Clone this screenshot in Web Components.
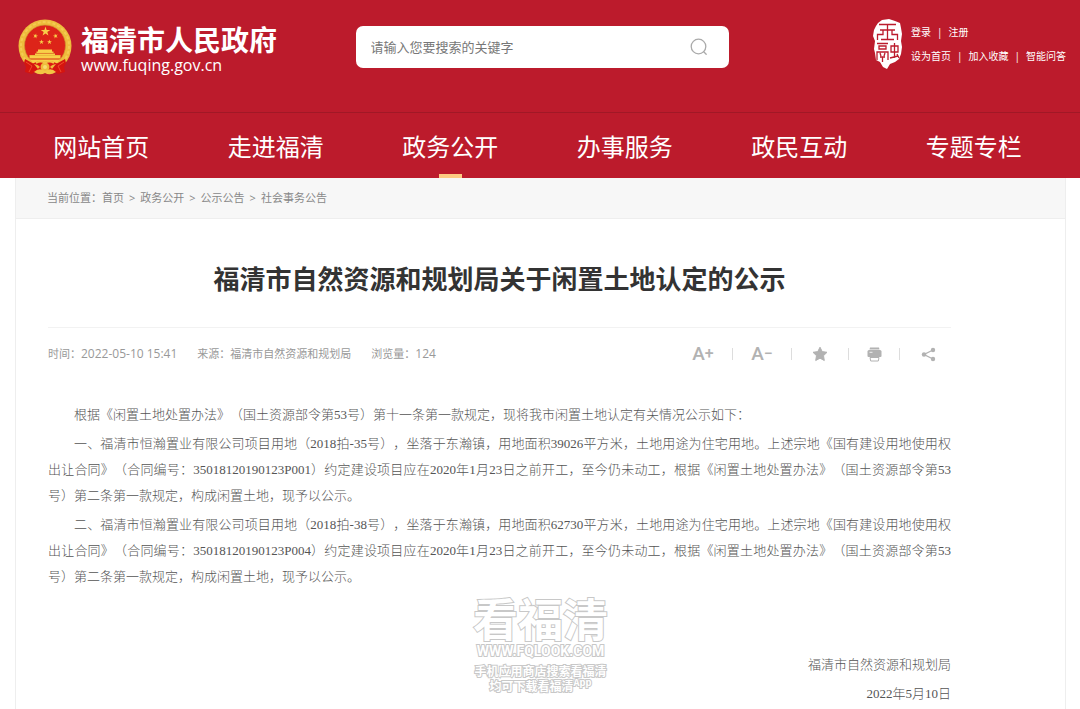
<!DOCTYPE html>
<html lang="zh-CN">
<head>
<meta charset="UTF-8">
<meta name="viewport" content="width=device-width, initial-scale=1">
<title>福清市自然资源和规划局关于闲置土地认定的公示</title>
<style>
  :root {
    --red: #bc1b2c;
    --red-dark: #a11826;
    --line: #eeeeee;
    --muted: #999999;
    --body-font: "Liberation Serif", "Noto Sans CJK SC", serif;
  }
  body {
    margin: 0;
    background: #fff;
    font-family: "Open Sans", "Noto Sans CJK SC", sans-serif;
    text-spacing-trim: space-all;
  }
</style>
</head>
<body>
  <gov-header>
    <site-logo slot="logo" url="www.fuqing.gov.cn">福清市人民政府</site-logo>
    <site-search slot="search" hint="请输入您要搜索的关键字"></site-search>
    <user-links slot="links"></user-links>
  </gov-header>
  <main-nav active="政务公开"></main-nav>
  <page-panel>
    <bread-crumb slot="crumb"></bread-crumb>
    <notice-article>
      <span slot="title">福清市自然资源和规划局关于闲置土地认定的公示</span>
      <article-meta slot="meta" time="2022-05-10 15:41" source="福清市自然资源和规划局" views="124"></article-meta>
      <article-tools slot="tools"></article-tools>
      <notice-text>根据《闲置土地处置办法》（国土资源部令第53号）第十一条第一款规定，现将我市闲置土地认定有关情况公示如下：</notice-text>
      <notice-text>一、福清市恒瀚置业有限公司项目用地（2018拍-35号），坐落于东瀚镇，用地面积39026平方米，土地用途为住宅用地。上述宗地《国有建设用地使用权出让合同》（合同编号：35018120190123P001）约定建设项目应在2020年1月23日之前开工，至今仍未动工，根据《闲置土地处置办法》（国土资源部令第53号）第二条第一款规定，构成闲置土地，现予以公示。</notice-text>
      <notice-text>二、福清市恒瀚置业有限公司项目用地（2018拍-38号），坐落于东瀚镇，用地面积62730平方米，土地用途为住宅用地。上述宗地《国有建设用地使用权出让合同》（合同编号：35018120190123P004）约定建设项目应在2020年1月23日之前开工，至今仍未动工，根据《闲置土地处置办法》（国土资源部令第53号）第二条第一款规定，构成闲置土地，现予以公示。</notice-text>
      <span slot="signer">福清市自然资源和规划局</span>
      <span slot="date">2022年5月10日</span>
    </notice-article>
    <water-mark slot="overlay"></water-mark>
  </page-panel>

<script>
  // Small helper: attach an open root and fill it
  const render = (el, html) => {
    el.attachShadow({ mode: 'open' }).innerHTML = html;
  };

  class GovHeader extends HTMLElement {
    constructor() {
      super();
      render(this, `
        <style>
          :host { display: block; background: var(--red); color: #fff; }
          header {
            display: grid;
            grid-template-columns: minmax(0, 1fr) 373px minmax(0, 1fr);
            align-items: center;
            padding: 19px 14px 37px 18px;
          }
          .end { display: flex; justify-content: flex-end; align-self: start; }
        </style>
        <header>
          <slot name="logo"></slot>
          <slot name="search"></slot>
          <div class="end"><slot name="links"></slot></div>
        </header>
      `);
    }
  }

  class SiteLogo extends HTMLElement {
    connectedCallback() {
      const star = 'M0-1L.225-.309H.951L.363.118L.588.809L0 .382L-.588.809L-.363.118L-.951-.309H-.225Z';
      render(this, `
        <style>
          :host { display: block; }
          a { display: flex; align-items: center; gap: 9px; color: #fff; text-decoration: none; }
          svg { flex: none; display: block; }
          .text { display: flex; flex-direction: column; padding-top: 6px; }
          .name { font-size: 28px; font-weight: 700; line-height: 30px; white-space: nowrap; }
          .url { font-size: 16px; line-height: 20px; }
        </style>
        <a href="#">
          <svg width="54" height="56" viewBox="0 0 54 56" aria-hidden="true">
            <circle cx="27" cy="27" r="26.5" fill="#eebc3c"/>
            <circle cx="27" cy="27" r="24" fill="none" stroke="#f3cb52" stroke-width="2" stroke-dasharray="3 2"/>
            <circle cx="27" cy="26.500" r="20.500" fill="#dd2419" stroke="#cf9330" stroke-width=".7"/>
            <g fill="#f8cf49">
              <path d="${star}" transform="translate(27.500 12.500) scale(5)"/>
              <path d="${star}" transform="translate(17.500 17) rotate(15) scale(2.600)"/>
              <path d="${star}" transform="translate(37.500 17) rotate(-15) scale(2.600)"/>
              <path d="${star}" transform="translate(23.500 23) scale(2.600)"/>
              <path d="${star}" transform="translate(31.500 23) scale(2.600)"/>
              <path d="M20 30.500H34V32.500H35.500V34H18.500V32.500H20Z"/>
              <path d="M17 34.500H37V36H42.500V39.500H11.500V36H17Z"/>
              <path d="M11.500 40.500H42.500L39 44H15Z"/>
            </g>
            <path d="M18 34.300H36M12 36.500H42M12 40H42" stroke="#d69a2a" stroke-width=".4"/>
            <path d="M7 40L16 45L20 50L14 55L7 53L8 48L6 44ZM47 40L38 45L34 50L40 55L47 53L46 48L48 44Z" fill="#d5150f"/>
            <path d="M8 43L14 47L11 53M46 43L40 47L43 53" fill="none" stroke="#f04a2b" stroke-width="1"/>
            <path d="M14 45Q20 45 22 48Q18 52 14 52Q19 56 27 53Q35 56 40 52Q36 52 32 48Q34 45 40 45Q34 41 27 43Q20 41 14 45Z" fill="#dc1a13"/>
            <circle cx="27" cy="48" r="4.500" fill="#eebc3c"/>
            <circle cx="27" cy="48" r="2" fill="#f7dc70"/>
            <path d="M16 53Q21 48 27 52Q33 48 38 53Q32 57 27 54Q22 57 16 53Z" fill="#f2c544"/>
            <path d="M18 44Q23 41 27 44Q31 41 36 44" fill="none" stroke="#f2c544" stroke-width="2"/>
          </svg>
          <span class="text">
            <span class="name"><slot></slot></span>
            <span class="url">${this.getAttribute('url')}</span>
          </span>
        </a>
      `);
    }
  }

  class SiteSearch extends HTMLElement {
    connectedCallback() {
      const hint = this.getAttribute('hint');
      render(this, `
        <style>
          :host { display: block; }
          form {
            display: flex;
            align-items: center;
            height: 42px;
            padding: 0 20px 0 15px;
            border-radius: 7px;
            background: #fff;
            box-sizing: border-box;
          }
          input {
            flex: 1;
            min-width: 0;
            padding: 0;
            border: 0;
            outline: 0;
            background: none;
            font: 13px/20px "Open Sans", "Noto Sans CJK SC", sans-serif;
            color: #555;
          }
          input::placeholder { color: #777; opacity: 1; }
          button { display: flex; padding: 0; border: 0; background: none; cursor: pointer; }
        </style>
        <form role="search" onsubmit="return false">
          <input type="text" placeholder="${hint}" aria-label="${hint}">
          <button type="submit" aria-label="搜索">
            <svg width="20" height="20" viewBox="0 0 20 20" fill="none" stroke="#aaa" stroke-width="1.300" stroke-linecap="round">
              <circle cx="9.500" cy="9.500" r="7.300"/>
              <path d="M14.700 14.700L17.200 17.200"/>
            </svg>
          </button>
        </form>
      `);
    }
  }

  class UserLinks extends HTMLElement {
    constructor() {
      super();
      const row = (items) => `<div class="row">${items.map((t) => `<a href="#">${t}</a>`).join('<span>|</span>')}</div>`;
      render(this, `
        <style>
          :host { display: flex; align-items: center; gap: 8px; }
          svg { flex: none; display: block; }
          .row { display: flex; gap: 6px; font-size: 10px; line-height: 24px; white-space: nowrap; }
          a { color: #fff; text-decoration: none; }
        </style>
        <svg width="30" height="50" viewBox="0 0 30 50" aria-hidden="true">
          <path d="M5 4L9 1L16 0L22 2L27 4L28 9L29 15L28 22L29 28L28 35L26 40L22 43L17 45L14 50L10 48L7 43L3 41L2 34L1 30L2 22L0 17L1 11L3 7Z" fill="#fff"/>
          <g fill="none" stroke="#bc1b2c" stroke-width="1.300">
            <path d="M6 5.500H23M7 11H22M14.500 5.500V20.500M4.500 21V15.500H10V11M24.500 21V15.500H19V11M8 20.500H21"/>
            <path d="M4 24.500H15M6 27H13V30H6ZM4 41V33H15V41M7 34L8 37M12 34L11 37M7 38H12M9.500 38V43"/>
            <path d="M18 27H25V33H18ZM21.500 24V39M17 39L25 37M24 35L26 39"/>
          </g>
        </svg>
        <nav aria-label="用户">
          ${row(['登录', '注册'])}
          ${row(['设为首页', '加入收藏', '智能问答'])}
        </nav>
      `);
    }
  }

  class MainNav extends HTMLElement {
    connectedCallback() {
      const items = ['网站首页', '走进福清', '政务公开', '办事服务', '政民互动', '专题专栏'];
      const active = this.getAttribute('active');
      render(this, `
        <style>
          :host { display: block; background: var(--red); border-top: 1px solid var(--red-dark); }
          nav { display: grid; grid-template-columns: repeat(6, 1fr); padding: 0 19px 0 14px; }
          a {
            display: flex;
            flex-direction: column;
            align-items: center;
            padding-top: 6px;
            color: #fff;
            font-size: 24px;
            line-height: 55px;
            text-decoration: none;
            white-space: nowrap;
          }
          /* bar under the current section */
          a::after { content: ""; width: 23px; height: 4px; }
          a[aria-current]::after { background: #fdcb83; }
        </style>
        <nav>
          ${items.map((t) => `<a href="#"${t === active ? ' aria-current="page"' : ''}>${t}</a>`).join('')}
        </nav>
      `);
    }
  }

  class PagePanel extends HTMLElement {
    constructor() {
      super();
      render(this, `
        <style>
          :host {
            display: block;
            position: relative;
            margin: 0 14px 0 15px;
            border: 1px solid var(--line);
            border-width: 0 1px;
          }
        </style>
        <slot name="crumb"></slot>
        <slot></slot>
        <slot name="overlay"></slot>
      `);
    }
  }

  class BreadCrumb extends HTMLElement {
    constructor() {
      super();
      const path = ['首页', '政务公开', '公示公告', '社会事务公告'];
      render(this, `
        <style>
          :host {
            display: flex;
            padding: 0 31px;
            background: #f7f7f7;
            border-bottom: 1px solid var(--line);
            color: #888;
            font-size: 11px;
            line-height: 40px;
            white-space: nowrap;
          }
          nav { display: flex; gap: 5px; }
          a { color: inherit; text-decoration: none; }
        </style>
        <span>当前位置：</span>
        <nav aria-label="当前位置">
          ${path.map((t) => `<a href="#">${t}</a>`).join('<span>&gt;</span>')}
        </nav>
      `);
    }
  }

  class NoticeArticle extends HTMLElement {
    constructor() {
      super();
      render(this, `
        <style>
          :host { display: block; padding: 42px 114px 2px 32px; }
          h1 { margin: 0 0 30px; color: #333; font-size: 26px; line-height: 36px; text-align: center; }
          .info {
            display: flex;
            justify-content: space-between;
            align-items: center;
            height: 52px;
            border-top: 1px solid #f2f2f2;
          }
          .text { display: flex; flex-direction: column; gap: 3px; padding-top: 22px; }
          .sign {
            display: flex;
            flex-direction: column;
            gap: 3px;
            padding-top: 62px;
            color: #555;
            font: 300 13px/26px var(--body-font);
            text-align: right;
          }
        </style>
        <article>
          <h1><slot name="title"></slot></h1>
          <div class="info"><slot name="meta"></slot><slot name="tools"></slot></div>
          <div class="text"><slot></slot></div>
          <div class="sign">
            <div><slot name="signer"></slot></div>
            <div><slot name="date"></slot></div>
          </div>
        </article>
      `);
    }
  }

  class NoticeText extends HTMLElement {
    constructor() {
      super();
      render(this, `
        <style>
          :host { display: block; }
          p {
            margin: 0;
            color: #555;
            font: 300 13px/26px var(--body-font);
            text-align: justify;
            text-indent: 2em;
          }
        </style>
        <p><slot></slot></p>
      `);
    }
  }

  class ArticleMeta extends HTMLElement {
    connectedCallback() {
      render(this, `
        <style>
          :host { display: flex; gap: 20px; color: var(--muted); font-size: 11px; line-height: 20px; white-space: nowrap; }
          .num { font-size: 12px; }
        </style>
        <span>时间：<span class="num">${this.getAttribute('time')}</span></span>
        <span>来源：${this.getAttribute('source')}</span>
        <span>浏览量：<span class="num">${this.getAttribute('views')}</span></span>
      `);
    }
  }

  class ArticleTools extends HTMLElement {
    constructor() {
      super();
      render(this, `
        <style>
          :host { display: flex; align-items: center; gap: 16px; padding-right: 11px; }
          button {
            display: flex;
            align-items: center;
            justify-content: center;
            width: 24px;
            height: 20px;
            padding: 0;
            border: 0;
            background: none;
            color: #b2b2b2;
            font: 500 19px/20px Roboto, sans-serif;
            cursor: pointer;
          }
          .font { width: 26px; }
          .print { width: 18px; }
          button span { font-size: 16px; }
          i { width: 1px; height: 12px; background: #ddd; }
        </style>
        <button type="button" class="font" aria-label="放大字体">A<span>+</span></button>
        <i></i>
        <button type="button" class="font" aria-label="缩小字体">A<span>−</span></button>
        <i></i>
        <button type="button" aria-label="收藏">
          <svg width="16" height="16" viewBox="0 0 16 16" fill="currentColor" stroke="currentColor" stroke-linejoin="round">
            <path d="M8 1.200L10.200 5.600L15 6.300L11.500 9.700L12.300 14.500L8 12.200L3.700 14.500L4.500 9.700L1 6.300L5.800 5.600Z"/>
          </svg>
        </button>
        <i></i>
        <button type="button" class="print" aria-label="打印">
          <svg width="15" height="15" viewBox="0 0 15 15" fill="currentColor">
            <path d="M3 .5H12L12.500 2.500H2.500Z"/>
            <path d="M2 3H13Q14.500 3 14.500 4.500V9Q14.500 10 13.500 10H1.500Q.5 10 .5 9V4.500Q.5 3 2 3Z"/>
            <path d="M3 10.500H12L11.300 14H3.700Z" fill="#fff" stroke="currentColor"/>
            <path d="M2.500 5.300H5.500" stroke="#fff" stroke-width=".8"/>
          </svg>
        </button>
        <i></i>
        <button type="button" aria-label="分享">
          <svg width="15" height="15" viewBox="0 0 15 15" fill="currentColor">
            <path d="M12 3L3 7.500L12 12" fill="none" stroke="currentColor" stroke-width="1.300"/>
            <circle cx="12" cy="3" r="2.200"/>
            <circle cx="3" cy="7.500" r="2.200"/>
            <circle cx="12" cy="12" r="2.200"/>
          </svg>
        </button>
      `);
    }
  }

  // Outlined app promo lying over the lower part of the page
  class WaterMark extends HTMLElement {
    constructor() {
      super();
      render(this, `
        <style>
          :host {
            position: absolute;
            left: 0;
            right: 0;
            bottom: 15px;
            display: flex;
            flex-direction: column;
            align-items: center;
            color: #fff;
            -webkit-text-stroke: 2px #c8c8c8;
            paint-order: stroke fill;
            font-weight: 700;
            font-size: 12px;
            line-height: 15px;
            pointer-events: none;
          }
          .big { font-size: 45px; line-height: 46px; }
          .web { font: 700 14px/16px Roboto, sans-serif; padding-bottom: 5px; }
          sup { font: 700 10px/10px "Liberation Mono", monospace; }
        </style>
        <span class="big">看福清</span>
        <span class="web">WWW.FQLOOK.COM</span>
        <span>手机应用商店搜索看福清</span>
        <span>均可下载看福清<sup>App</sup></span>
      `);
    }
  }

  customElements.define('gov-header', GovHeader);
  customElements.define('site-logo', SiteLogo);
  customElements.define('site-search', SiteSearch);
  customElements.define('user-links', UserLinks);
  customElements.define('main-nav', MainNav);
  customElements.define('page-panel', PagePanel);
  customElements.define('bread-crumb', BreadCrumb);
  customElements.define('notice-article', NoticeArticle);
  customElements.define('notice-text', NoticeText);
  customElements.define('article-meta', ArticleMeta);
  customElements.define('article-tools', ArticleTools);
  customElements.define('water-mark', WaterMark);
</script>
</body>
</html>
